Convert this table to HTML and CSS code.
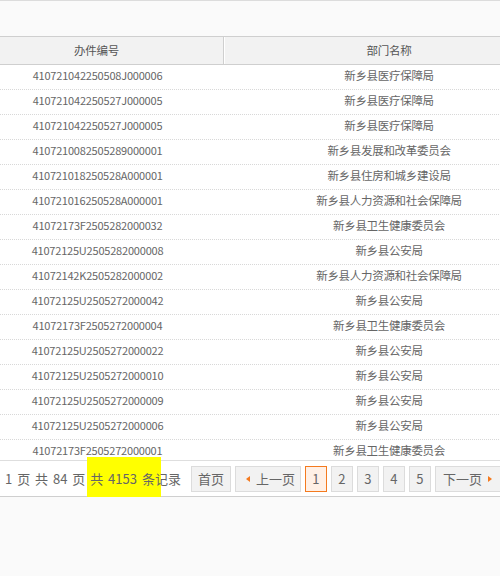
FILE: index.html
```html
<!DOCTYPE html>
<html lang="zh-CN">
<head>
<meta charset="utf-8">
<title>办件列表</title>
<link rel="stylesheet" href="styles.css">
</head>
<body>
<div class="page">
  <div class="toolbar"></div>
  <div class="grid">
    <div class="head">
      <div class="hc c1">办件编号</div>
      <div class="hc c2">部门名称</div>
    </div>
    <div class="row"><div class="cell c1 code">410721042250508J000006</div><div class="cell c2">新乡县医疗保障局</div></div>
    <div class="row"><div class="cell c1 code">410721042250527J000005</div><div class="cell c2">新乡县医疗保障局</div></div>
    <div class="row"><div class="cell c1 code">410721042250527J000005</div><div class="cell c2">新乡县医疗保障局</div></div>
    <div class="row"><div class="cell c1 code">4107210082505289000001</div><div class="cell c2">新乡县发展和改革委员会</div></div>
    <div class="row"><div class="cell c1 code">410721018250528A000001</div><div class="cell c2">新乡县住房和城乡建设局</div></div>
    <div class="row"><div class="cell c1 code">410721016250528A000001</div><div class="cell c2">新乡县人力资源和社会保障局</div></div>
    <div class="row"><div class="cell c1 code">41072173F2505282000032</div><div class="cell c2">新乡县卫生健康委员会</div></div>
    <div class="row"><div class="cell c1 code">41072125U2505282000008</div><div class="cell c2">新乡县公安局</div></div>
    <div class="row"><div class="cell c1 code">41072142K2505282000002</div><div class="cell c2">新乡县人力资源和社会保障局</div></div>
    <div class="row"><div class="cell c1 code">41072125U2505272000042</div><div class="cell c2">新乡县公安局</div></div>
    <div class="row"><div class="cell c1 code">41072173F2505272000004</div><div class="cell c2">新乡县卫生健康委员会</div></div>
    <div class="row"><div class="cell c1 code">41072125U2505272000022</div><div class="cell c2">新乡县公安局</div></div>
    <div class="row"><div class="cell c1 code">41072125U2505272000010</div><div class="cell c2">新乡县公安局</div></div>
    <div class="row"><div class="cell c1 code">41072125U2505272000009</div><div class="cell c2">新乡县公安局</div></div>
    <div class="row"><div class="cell c1 code">41072125U2505272000006</div><div class="cell c2">新乡县公安局</div></div>
    <div class="row last"><div class="cell c1 code">41072173F2505272000001</div><div class="cell c2">新乡县卫生健康委员会</div></div>
  </div>
  <div class="pager">
    <span class="mark"></span>
    <span class="info">1 页 共 84 页 共 4153 条记录</span>
    <div class="btns">
      <span class="btn">首页</span>
      <span class="btn prev"><i class="tri tri-l"></i>上一页</span>
      <span class="btn num active">1</span>
      <span class="btn num">2</span>
      <span class="btn num">3</span>
      <span class="btn num">4</span>
      <span class="btn num">5</span>
      <span class="btn next">下一页<i class="tri tri-r"></i></span>
    </div>
  </div>
</div>
</body>
</html>
```
FILE: styles.css
```css
html, body {
  margin: 0;
  padding: 0;
  background: #fafafa;
  overflow: hidden;
}
.page {
  width: 500px;
  height: 576px;
  overflow: hidden;
  font-family: "Noto Sans CJK SC", "Liberation Sans", sans-serif;
  color: #666;
  background: #fafafa;
  border-top: 1px solid #dcdcdc;
  box-sizing: border-box;
}
.toolbar {
  height: 35px;
  background: #fafafa;
}
.grid {
  margin-left: -30px;
  width: 583px;
  background: #fff;
}
.head {
  display: grid;
  grid-template-columns: 254px 1fr;
  height: 27px;
  background: #f2f2f2;
  border-top: 1px solid #cfcfcf;
  border-bottom: 1px solid #cfcfcf;
}
.hc {
  font-size: 11.5px;
  line-height: 26px;
  text-align: center;
  color: #555;
  letter-spacing: -0.3px;
}
.hc.c1 {
  border-right: 1px solid #cfcfcf;
}
.hc.c2 {
  border-left: 1px solid #fff;
}
.row {
  display: grid;
  grid-template-columns: 255px 1fr;
  height: 24px;
  border-bottom: 1px dotted #d8d8d8;
}
.row.last {
  height: 20px;
  border-bottom: 0;
}
.cell {
  font-size: 11.5px;
  letter-spacing: -0.3px;
  line-height: 21px;
  text-align: center;
  color: #666;
}
.cell.code {
  font-size: 11px;
  letter-spacing: -0.2px;
}
.pager {
  position: relative;
  isolation: isolate;
  display: flex;
  align-items: center;
  height: 35px;
  padding-left: 5px;
  background: #fff;
  border-top: 1px solid #dedede;
  border-bottom: 1px solid #cfcfcf;
  font-size: 13px;
  color: #666;
  white-space: nowrap;
}
.mark {
  position: absolute;
  left: 87px;
  top: -4px;
  width: 74px;
  height: 40px;
  background: #ffff00;
  z-index: -1;
}
.info {
  word-spacing: 2px;
}
.btns {
  display: flex;
  gap: 4px;
  margin-left: 10px;
}
.btn {
  display: flex;
  align-items: center;
  justify-content: center;
  height: 24px;
  padding: 0 6px;
  background: #f2f2f2;
  border: 1px solid #dcdcdc;
  font-size: 13px;
  color: #666;
}
.btn.num {
  width: 20px;
  padding: 0;
}
.btn.active {
  background: #fff0e6;
  border-color: #f47a1f;
}
.btn.prev {
  padding: 0 5px 0 10px;
}
.btn.next {
  padding: 0 8px 0 7px;
}
.tri {
  display: inline-block;
  width: 0;
  height: 0;
  border-top: 3px solid transparent;
  border-bottom: 3px solid transparent;
}
.tri-l {
  border-right: 4px solid #f47a1f;
  margin-right: 6px;
}
.tri-r {
  border-left: 4px solid #f47a1f;
  margin-left: 6px;
}
```
